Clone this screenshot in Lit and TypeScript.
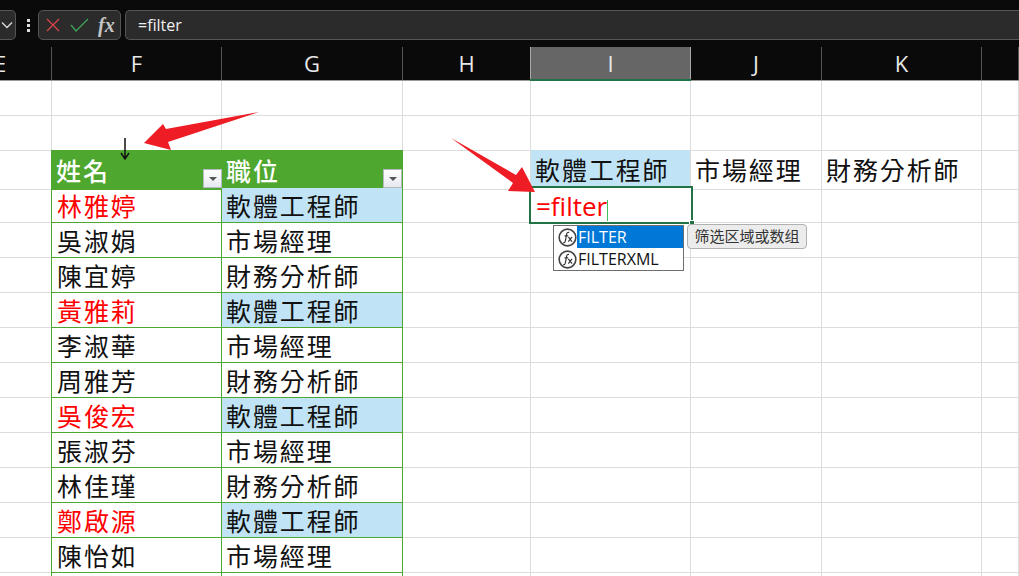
import { LitElement, html, css, svg } from "lit";
import { customElement } from "lit/decorators.js";

const COLS = [52, 170, 181, 128, 160, 131, 160, 37];
const HEADS = ["E", "F", "G", "H", "I", "J", "K", ""];
const ROWS: [string, string, boolean][] = [
  ["林雅婷", "軟體工程師", true],
  ["吳淑娟", "市場經理", false],
  ["陳宜婷", "財務分析師", false],
  ["黃雅莉", "軟體工程師", true],
  ["李淑華", "市場經理", false],
  ["周雅芳", "財務分析師", false],
  ["吳俊宏", "軟體工程師", true],
  ["張淑芬", "市場經理", false],
  ["林佳瑾", "財務分析師", false],
  ["鄭啟源", "軟體工程師", true],
  ["陳怡如", "市場經理", false],
  ["", "", false],
];

const fxIcon = svg`<svg class="fxi" viewBox="0 0 18 18" width="19" height="19">
  <circle cx="9" cy="9" r="7.9" fill="#fff" stroke="#444" stroke-width="1.500"/>
  <path d="M10.500 4.300c-1.400-.5-2 .2-2.300 1.500L6.900 12.500c-.3 1.300-1 1.700-2 1.300M6.200 7.500h3.400" fill="none" stroke="#333" stroke-width="1.100"/>
  <path d="M9.800 8.500l3.500 4.500M13.300 8.500l-3.500 4.500" fill="none" stroke="#333" stroke-width="1.100"/>
</svg>`;

@customElement("app-root")
export class AppRoot extends LitElement {
  static styles = css`
    :host {
      display: block;
      width: 1019px;
      height: 576px;
      position: relative;
      overflow: hidden;
      background: #fff;
      font-family: "Noto Sans CJK TC", "Liberation Sans", sans-serif;
    }
    .toolbar {
      height: 47px;
      box-sizing: border-box;
      background: #0a0a0a;
      display: flex;
      align-items: flex-start;
      padding-top: 10px;
      gap: 4px;
    }
    .namebox {
      width: 16px;
      height: 30px;
      box-sizing: border-box;
      background: #2b2b2b;
      border: 1px solid #555;
      border-left: 0;
      border-radius: 0 5px 5px 0;
      display: flex;
      align-items: center;
      justify-content: flex-end;
      padding-right: 2px;
    }
    .dots {
      width: 14px;
      height: 30px;
      display: flex;
      flex-direction: column;
      align-items: center;
      justify-content: center;
      gap: 2px;
      margin: 0 0 0 1px;
    }
    .dots i {
      width: 3px;
      height: 3px;
      background: #ddd;
      display: block;
    }
    .btns {
      width: 83px;
      height: 30px;
      box-sizing: border-box;
      background: #2b2b2b;
      border: 1px solid #555;
      border-radius: 5px;
      display: flex;
      align-items: center;
      padding-left: 6px;
      margin-left: -1px;
    }
    .btns svg {
      display: block;
    }
    .fx {
      font-family: "Liberation Serif", serif;
      font-style: italic;
      font-weight: 700;
      color: #c4c4c4;
      font-size: 20px;
      line-height: 28px;
      margin-left: 8px;
    }
    .formula {
      flex: 1;
      height: 30px;
      box-sizing: border-box;
      background: #2b2b2b;
      border: 1px solid #555;
      border-right: 0;
      border-radius: 5px 0 0 5px;
      color: #f0f0f0;
      font-family: "Open Sans", "Liberation Sans", sans-serif;
      font-size: 16px;
      line-height: 28px;
      padding-left: 12px;
    }
    .row {
      display: grid;
      grid-template-columns: 52px 170px 181px 128px 160px 131px 160px 37px;
    }
    .heads {
      background: #0a0a0a;
      border-bottom: 1px solid #9a9a9a;
      height: 33px;
    }
    .head {
      color: #e8e8e8;
      font-family: "Open Sans", "Liberation Sans", sans-serif;
      font-size: 22px;
      line-height: 33px;
      text-align: center;
      border-right: 1px solid #555;
      box-sizing: border-box;
    }
    .head.first {
      text-align: left;
      text-indent: -6px;
      overflow: hidden;
    }
    .head.sel {
      background: #666;
      border-left: 1px solid #aaa;
      border-right: 1px solid #aaa;
      margin-left: -1px;
      position: relative;
    }
    .head.sel::after {
      content: "";
      position: absolute;
      left: -1px;
      right: -1px;
      bottom: -1px;
      height: 2px;
      background: #217346;
    }
    .sheetrow {
      height: 35px;
    }
    .sheetrow.h37 {
      height: 37px;
    }
    .cell {
      box-sizing: border-box;
      border-right: 1px solid #dcdcdc;
      border-bottom: 1px solid #dcdcdc;
      font-size: 25px;
      line-height: 34px;
      color: #111;
      padding-left: 4px;
      white-space: nowrap;
      position: relative;
      letter-spacing: 1.9px;
    }
    .h37 .cell {
      line-height: 37px;
    }
    .h37 .cell.hd {
      line-height: 40px;
      background: #4ea72e;
      color: #fff;
      font-weight: 500;
      border-right: 0;
      border-bottom: 0;
      margin-top: -1px;
    }
    .cell.hd.f {
      margin-left: -1px;
      padding-left: 5px;
    }
    .cell.hd.g {
      border-right: 1px solid #4ea72e;
    }
    .h37 .cell.blue.top {
      margin-top: -1px;
      line-height: 38px;
    }
    .cell.t {
      border-right: 1px solid #4ea72e;
      border-bottom: 1px solid #4ea72e;
    }
    .cell.t.f {
      margin-left: -1px;
      padding-left: 5px;
      border-left: 1px solid #4ea72e;
    }
    .red {
      color: #ff0000;
    }
    .blue {
      background: #c0e4f5;
    }
    .filter {
      position: absolute;
      right: 0;
      bottom: 2px;
      width: 19px;
      height: 19px;
      box-sizing: border-box;
      background: linear-gradient(#fff, #e6e9ef);
      border: 1px solid #b5b9c2;
      display: flex;
      align-items: center;
      justify-content: center;
    }
    .filter::after {
      content: "";
      border: 4px solid transparent;
      border-top: 4px solid #555;
      border-bottom: 0;
    }
    .editor {
      position: absolute;
      left: 529px;
      top: 186px;
      width: 164px;
      height: 38px;
      box-sizing: border-box;
      border: 2px solid #217346;
      color: #ff0000;
      font-family: "Open Sans", "Liberation Sans", sans-serif;
      font-size: 26px;
      line-height: 37px;
      padding-left: 5px;
      background: #fff;
    }
    .caret {
      display: inline-block;
      width: 1px;
      height: 21px;
      background: #3fbf5f;
      vertical-align: -5px;
    }
    .handle {
      position: absolute;
      right: -4px;
      bottom: -4px;
      width: 6px;
      height: 6px;
      background: #217346;
      border: 1px solid #fff;
      box-sizing: border-box;
    }
    .ac {
      position: absolute;
      left: 553px;
      top: 225px;
      width: 131px;
      height: 46px;
      box-sizing: border-box;
      border: 1px solid #6e6e6e;
      background: #fff;
      font-family: "Open Sans", "Liberation Sans", sans-serif;
      font-size: 16px;
      color: #111;
    }
    .ac .it {
      height: 22px;
      display: flex;
      align-items: center;
      padding-left: 4px;
      line-height: 22px;
    }
    .ac .lbl {
      flex: 1;
      padding-left: 1px;
    }
    .ac .it.on .lbl {
      background: #0078d7;
      color: #fff;
    }
    .fxi {
      flex: none;
      display: block;
    }
    .tip {
      position: absolute;
      left: 687px;
      top: 224px;
      width: 120px;
      height: 25px;
      box-sizing: border-box;
      background: #ececec;
      border: 1px solid #b0b0b0;
      border-radius: 4px;
      font-size: 15px;
      color: #333;
      line-height: 22px;
      text-align: center;
      white-space: nowrap;
    }
    .overlay {
      position: absolute;
      left: 0;
      top: 0;
      pointer-events: none;
    }
  `;

  render() {
    return html`
      <div class="toolbar">
        <div class="namebox">
          <svg width="12" height="12" viewBox="0 0 12 12"><path d="M1 3.500l5 5 5-5" fill="none" stroke="#ddd" stroke-width="1.300"/></svg>
        </div>
        <div class="dots"><i></i><i></i><i></i></div>
        <div class="btns">
          <svg width="16" height="16" viewBox="0 0 16 16"><path d="M2 2l12 12M14 2L2 14" fill="none" stroke="#d8464a" stroke-width="1.300"/></svg>
          <svg width="20" height="16" viewBox="0 0 20 16" style="margin-left:9px"><path d="M1 8l5 6L18 2" fill="none" stroke="#3fa35a" stroke-width="1.300"/></svg>
          <span class="fx">fx</span>
        </div>
        <div class="formula">=filter</div>
      </div>
      <div class="row heads">
        ${HEADS.map(
          (h, i) => html`<div class="head ${i === 0 ? "first" : ""} ${h === "I" ? "sel" : ""}">${h}</div>`
        )}
      </div>
      ${this.blank()} ${this.blank()}
      <div class="row sheetrow h37">
        <div class="cell"></div>
        <div class="cell hd f">姓名<span class="filter"></span></div>
        <div class="cell hd g">職位<span class="filter"></span></div>
        <div class="cell"></div>
        <div class="cell blue top">軟體工程師</div>
        <div class="cell">市場經理</div>
        <div class="cell">財務分析師</div>
        <div class="cell"></div>
      </div>
      ${ROWS.map(
        ([n, j, r]) => html`<div class="row sheetrow">
          <div class="cell"></div>
          <div class="cell t f ${r ? "red" : ""}">${n}</div>
          <div class="cell t ${r ? "blue" : ""}">${j}</div>
          <div class="cell"></div>
          <div class="cell"></div>
          <div class="cell"></div>
          <div class="cell"></div>
          <div class="cell"></div>
        </div>`
      )}
      <div class="editor">=filter<span class="caret"></span><span class="handle"></span></div>
      <div class="ac">
        <div class="it on">${fxIcon}<span class="lbl">FILTER</span></div>
        <div class="it">${fxIcon}<span class="lbl">FILTERXML</span></div>
      </div>
      <div class="tip">筛选区域或数组</div>
      <svg class="overlay" width="1019" height="576" viewBox="0 0 1019 576">
        <path d="M259 112L166 129L163 124L144 143L171 150L168 142Z" fill="#ee1c25"/>
        <path d="M451 138L516 175L522 167L535 192L508 191L513 183Z" fill="#ee1c25"/>
        <path d="M125 138V158M121 153l4 6 4-6" fill="none" stroke="#111" stroke-width="1.500"/>
      </svg>
    `;
  }

  blank() {
    return html`<div class="row sheetrow">
      ${COLS.map(() => html`<div class="cell"></div>`)}
    </div>`;
  }
}
